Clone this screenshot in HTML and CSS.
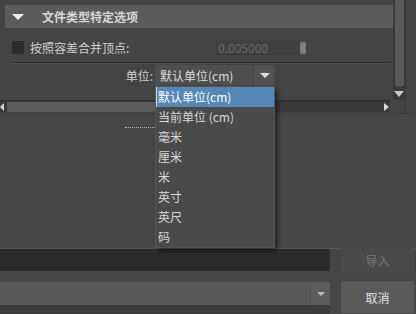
FILE: index.html
```html
<!DOCTYPE html>
<html>
<head>
<meta charset="utf-8">
<link rel="stylesheet" href="styles.css">
</head>
<body>
<div class="page">
  <div class="top">
    <div class="content">
      <div class="header"><span class="tri"></span><span class="htitle">文件类型特定选项</span></div>
      <div class="row2">
        <span class="check"></span><span class="lbl">按照容差合并顶点:</span>
        <span class="numfield">0.005000</span><span class="handle"></span>
      </div>
      <div class="sep"></div>
      <div class="row3">
        <span class="ulbl">单位:</span>
        <div class="combo"><span class="ctext">默认单位(cm)</span><span class="carrow"><span class="dtri"></span></span></div>
      </div>
      <div class="hscroll"><span class="larrow"></span><span class="hthumb"></span><span class="rarrow"></span></div>
    </div>
    <div class="vscroll"><span class="vthumb"></span><span class="varrow"></span></div>
    <div class="rgap"></div>
  </div>
  <div class="middle"><span class="dots"></span></div>
  <div class="brow1">
    <div class="namefield"></div>
    <div class="btn disabled">导入</div>
  </div>
  <div class="brow2">
    <div class="typecol">
      <div class="typecombo"><span class="tarrow"><span class="dtri small"></span></span></div>
      <div class="typebelow"></div>
    </div>
    <div class="btn cancel">取消</div>
  </div>

  <div class="list">
    <div class="item sel">默认单位(cm)</div>
    <div class="item">当前单位 (cm)</div>
    <div class="item">毫米</div>
    <div class="item">厘米</div>
    <div class="item">米</div>
    <div class="item">英寸</div>
    <div class="item">英尺</div>
    <div class="item">码</div>
  </div>
</div>
</body>
</html>
```
FILE: styles.css
```css
html, body { margin: 0; padding: 0; }
body { background: #464646; font-family: "Noto Sans CJK SC", "Noto Sans", sans-serif; font-size: 12px; color: #d6d6d6; }
.page { position: relative; width: 416px; height: 314px; overflow: hidden; display: flex; flex-direction: column; }
.top { height: 113px; display: flex; background: #444444; }
.content { width: 390px; display: flex; flex-direction: column; }
.header { margin: 5px 0 0 5px; width: 388px; height: 23px; background: #5b5b5b; display: flex; align-items: center; box-sizing: border-box; padding-left: 7px; }
.tri { width: 0; height: 0; border-left: 6px solid transparent; border-right: 6px solid transparent; border-top: 6px solid #f0f0f0; }
.htitle { margin-left: 18px; font-weight: bold; color: #d8d8d8; line-height: 23px; }
.row2 { height: 15px; margin-top: 12px; display: flex; align-items: center; padding-left: 12px; }
.check { flex: none; width: 12px; height: 13px; background: #2b2d30; }
.lbl { flex: none; margin-left: 6px; color: #d0d0d0; width: 186px; }
.numfield { flex: none; width: 81px; height: 15px; line-height: 15px; background: #404040; color: #6a6a6a; box-sizing: border-box; padding-left: 2px; border-bottom: 1px solid #3a3a3a; }
.handle { flex: none; width: 6px; height: 12px; margin-left: 3px; background: #7e7e7e; border-radius: 2px; }
.sep { margin: 7px 0 0 12px; width: 379px; height: 1px; background: #2e2e2e; border-bottom: 1px solid #505050; }
.row3 { height: 20px; margin-top: 1px; display: flex; align-items: center; }
.ulbl { flex: none; width: 153px; text-align: right; color: #d0d0d0; }
.combo { flex: none; margin-left: 2px; width: 120px; height: 20px; background: #4e4e4e; display: flex; align-items: center; }
.ctext { flex: 1; padding-left: 5px; color: #dcdcdc; }
.carrow { width: 21px; height: 20px; display: flex; align-items: center; justify-content: center; border-left: 1px solid #444; background: #525252; }
.dtri { width: 0; height: 0; border-left: 5px solid transparent; border-right: 5px solid transparent; border-top: 5px solid #dedede; }
.dtri.small { border-left-width: 4px; border-right-width: 4px; border-top-width: 4px; border-top-color: #bdbdbd; }
.hscroll { margin-top: 15px; height: 11px; background: #383838; display: flex; align-items: center; border-top: 1px solid #2e2e2e; position: relative; }
.larrow { width: 0; height: 0; border-top: 4px solid transparent; border-bottom: 4px solid transparent; border-right: 4px solid #d8d8d8; margin-left: 0; }
.hthumb { margin-left: 3px; width: 200px; height: 10px; background: #5c5c5c; }
.rarrow { margin-left: auto; margin-right: 1px; width: 0; height: 0; border-top: 4px solid transparent; border-bottom: 4px solid transparent; border-left: 5px solid #d8d8d8; }
.vscroll { margin-left: 3px; width: 12px; height: 100px; background: #3a3a3a; display: flex; flex-direction: column; align-items: center; }
.vthumb { width: 9px; height: 87px; background: #595959; border-radius: 0 0 4px 4px; }
.varrow { margin-top: 4px; width: 0; height: 0; border-left: 5px solid transparent; border-right: 5px solid transparent; border-top: 6px solid #c8c8c8; }
.rgap { flex: 1; background: #454545; border-left: 1px solid #3a3a3a; }
.middle { height: 135px; position: relative; border-top: 1px solid #3c3c3c; box-sizing: border-box; }
.dots { position: absolute; left: 125px; top: 13px; width: 40px; border-top: 1px dotted #b8b8b8; }
.brow1 { height: 25px; display: flex; border-top: 1px solid #585858; box-sizing: border-box; }
.namefield { width: 330px; height: 22px; background: #2b2b2b; }
.btn { margin-left: 11px; width: 73px; display: flex; align-items: center; justify-content: center; }
.btn.disabled { height: 24px; margin-top: -1px; background: #4a4a4a; color: #767676; }
.brow2 { margin-top: 8px; flex: 1; display: flex; }
.typecol { width: 330px; display: flex; flex-direction: column; }
.typecombo { height: 23px; margin-top: 1px; background: #595959; display: flex; justify-content: flex-end; }
.tarrow { width: 19px; display: flex; align-items: center; justify-content: center; background: #5c5c5c; border-left: 1px solid #525252; }
.typebelow { flex: 1; background: #3c3c3c; }
.btn.cancel { background: #5a5a5a; color: #e2e2e2; height: 32px; }
.list { position: absolute; left: 155px; top: 86px; width: 120px; height: 162px; background: #4a4a4a; box-sizing: border-box; border: 1px solid #555; padding-top: 0; box-shadow: 3px 3px 4px rgba(0,0,0,0.45); }
.item { height: 20px; line-height: 20px; padding-left: 2px; color: #d8d8d8; }
.item.sel { background: #5588b6; color: #fff; border-left: 1px solid #c8dcec; padding-left: 1px; }
```
